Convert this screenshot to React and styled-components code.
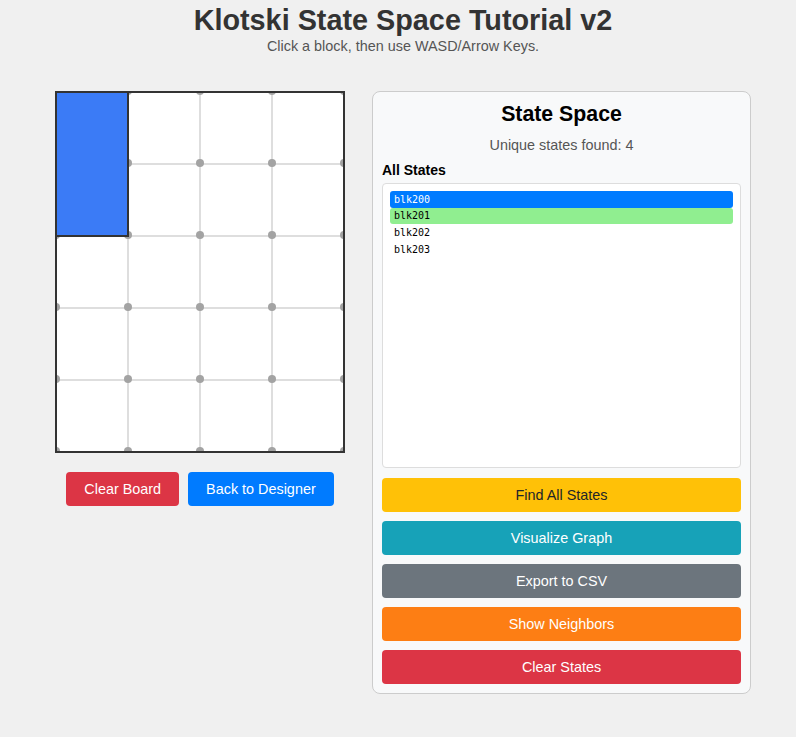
import React from "react";
import styled, { createGlobalStyle } from "styled-components";

const Global = createGlobalStyle`
  html, body { margin: 0; padding: 0; background: #f0f0f0; }
  body { font-family: "Liberation Sans", Arial, sans-serif; }
  * { box-sizing: border-box; }
`;

const Page = styled.div`
  width: 796px;
  padding-left: 10px;
`;

const Title = styled.h1`
  margin: 4px 0 0;
  font-size: 28.8px;
  line-height: 33px;
  font-weight: bold;
  color: #333;
  text-align: center;
`;

const Subtitle = styled.p`
  margin: 1px 0 0;
  font-size: 14.4px;
  line-height: 16px;
  color: #555;
  text-align: center;
`;

const Main = styled.div`
  display: flex;
  justify-content: center;
  align-items: flex-start;
  gap: 27px;
  margin-top: 37px;
`;

const LeftColumn = styled.div`
  display: flex;
  flex-direction: column;
  align-items: center;
`;

const Board = styled.div`
  position: relative;
  display: grid;
  grid-template-columns: repeat(4, 70px);
  grid-template-rows: repeat(5, 70px);
  gap: 2px;
  background: #dedede;
  border: 2px solid #333;
  overflow: hidden;
`;

const Cell = styled.div`
  background: #fff;
`;

const Dot = styled.span`
  position: absolute;
  width: 8px;
  height: 8px;
  border-radius: 50%;
  background: #a3a3a3;
  left: ${(p) => p.$x - 4}px;
  top: ${(p) => p.$y - 4}px;
`;

const Block = styled.div`
  position: absolute;
  left: ${(p) => p.$col * 72 - 2}px;
  top: ${(p) => p.$row * 72 - 2}px;
  width: ${(p) => p.$w * 72 + 2}px;
  height: ${(p) => p.$h * 72 + 2}px;
  background: #3b7bf6;
  border: 2px solid #333;
  z-index: 2;
`;

const ButtonRow = styled.div`
  display: flex;
  gap: 9px;
  margin-top: 19px;
`;

const BoardButton = styled.button`
  height: 34px;
  padding: 0 18px;
  border: none;
  border-radius: 4px;
  font-family: "Liberation Sans", Arial, sans-serif;
  font-size: 14.4px;
  color: #fff;
  background: ${(p) => p.$bg};
  cursor: pointer;
`;

const Panel = styled.div`
  width: 379px;
  background: #f8f9fa;
  border: 1px solid #ccc;
  border-radius: 8px;
  padding: 10px 9px 9px;
  display: flex;
  flex-direction: column;
`;

const PanelTitle = styled.h2`
  margin: 0;
  font-size: 21.3px;
  line-height: 24px;
  font-weight: bold;
  color: #000;
  text-align: center;
`;

const Count = styled.p`
  margin: 11px 0 0;
  font-size: 14.4px;
  line-height: 16px;
  color: #555;
  text-align: center;
`;

const ListLabel = styled.h3`
  margin: 9px 0 0;
  font-size: 14px;
  line-height: 16px;
  font-weight: bold;
  color: #000;
`;

const StateList = styled.div`
  margin-top: 5px;
  height: 285px;
  background: #fff;
  border: 1px solid #ddd;
  border-radius: 4px;
  padding: 7px;
`;

const StateItem = styled.div`
  font-family: "DejaVu Sans Mono", monospace;
  font-size: 10px;
  line-height: 11.7px;
  padding: 2.5px 4px;
  border-radius: 3px;
  background: ${(p) => (p.$state === "selected" ? "#007bff" : p.$state === "neighbor" ? "#90ee90" : "transparent")};
  color: ${(p) => (p.$state === "selected" ? "#fff" : "#000")};
`;

const ActionList = styled.div`
  display: flex;
  flex-direction: column;
  gap: 9px;
  margin-top: 10px;
`;

const ActionButton = styled.button`
  height: 34px;
  width: 100%;
  border: none;
  border-radius: 4px;
  font-family: "Liberation Sans", Arial, sans-serif;
  font-size: 14.4px;
  color: ${(p) => p.$fg || "#fff"};
  background: ${(p) => p.$bg};
  cursor: pointer;
`;

const dots = [];
for (let r = 0; r <= 5; r++) {
  for (let c = 0; c <= 4; c++) {
    dots.push({ x: c * 72 - 1, y: r * 72 - 2, key: `${r}-${c}` });
  }
}

const states = [
  { id: "blk200", state: "selected" },
  { id: "blk201", state: "neighbor" },
  { id: "blk202", state: "" },
  { id: "blk203", state: "" },
];

const actions = [
  { label: "Find All States", bg: "#ffc107", fg: "#212529" },
  { label: "Visualize Graph", bg: "#17a2b8" },
  { label: "Export to CSV", bg: "#6c757d" },
  { label: "Show Neighbors", bg: "#fd7e14" },
  { label: "Clear States", bg: "#dc3545" },
];

export default function App() {
  return (
    <Page>
      <Global />
      <Title>Klotski State Space Tutorial v2</Title>
      <Subtitle>Click a block, then use WASD/Arrow Keys.</Subtitle>
      <Main>
        <LeftColumn>
          <Board>
            {Array.from({ length: 20 }).map((_, i) => (
              <Cell key={i} />
            ))}
            {dots.map((d) => (
              <Dot key={d.key} $x={d.x} $y={d.y} />
            ))}
            <Block $col={0} $row={0} $w={1} $h={2} />
          </Board>
          <ButtonRow>
            <BoardButton $bg="#dc3545">Clear Board</BoardButton>
            <BoardButton $bg="#007bff">Back to Designer</BoardButton>
          </ButtonRow>
        </LeftColumn>
        <Panel>
          <PanelTitle>State Space</PanelTitle>
          <Count>Unique states found: 4</Count>
          <ListLabel>All States</ListLabel>
          <StateList>
            {states.map((s) => (
              <StateItem key={s.id} $state={s.state}>
                {s.id}
              </StateItem>
            ))}
          </StateList>
          <ActionList>
            {actions.map((a) => (
              <ActionButton key={a.label} $bg={a.bg} $fg={a.fg}>
                {a.label}
              </ActionButton>
            ))}
          </ActionList>
        </Panel>
      </Main>
    </Page>
  );
}
